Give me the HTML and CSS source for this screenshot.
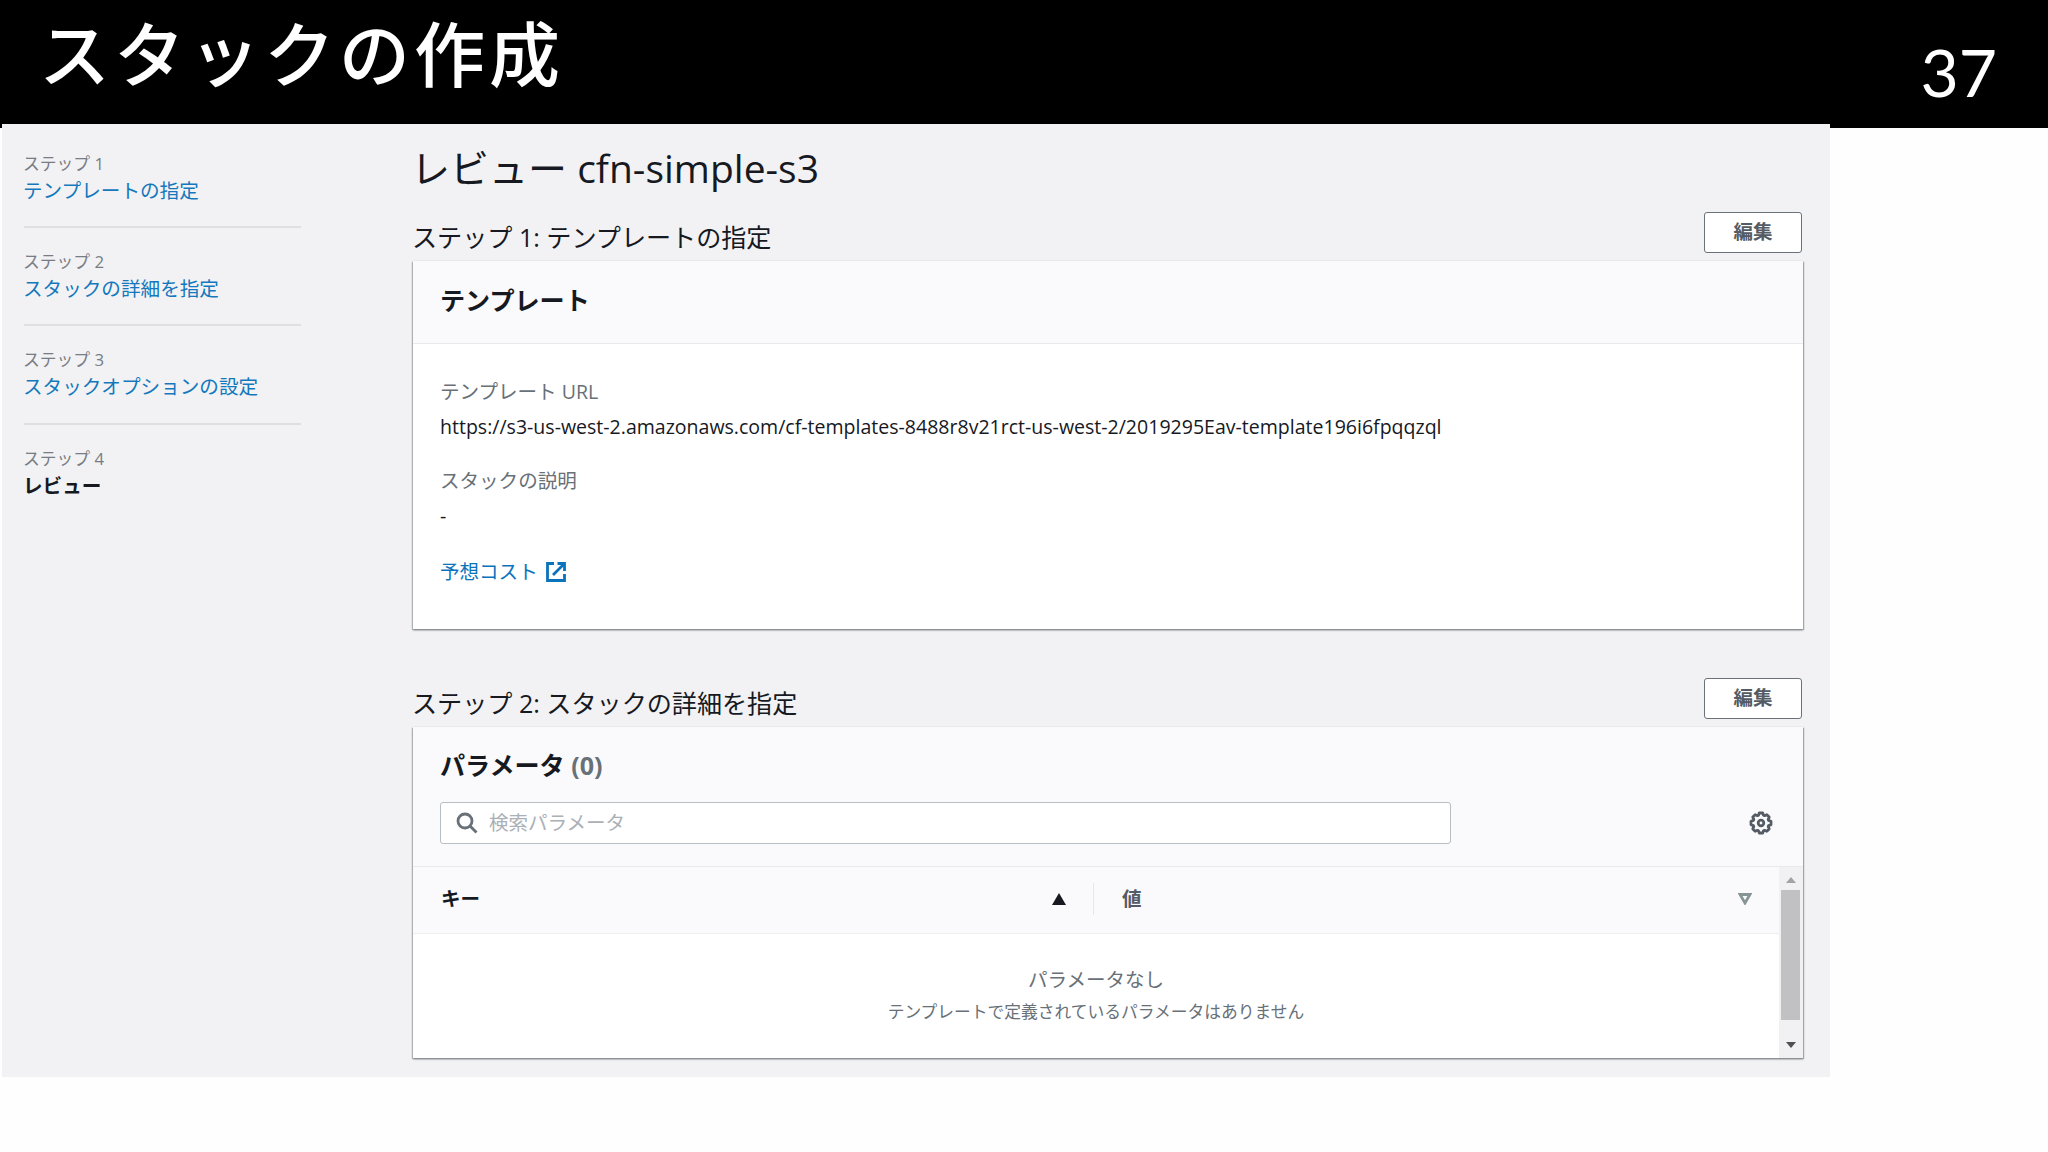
FILE: index.html
```html
<!DOCTYPE html>
<html lang="ja">
<head>
  <meta charset="UTF-8" />
  <meta name="viewport" content="width=device-width, initial-scale=1.0"/>
  <title>スタックの作成</title>
  <link rel="stylesheet" href="styles.css">
</head>
<body>
  <header class="slide-header">
    <h1>スタックの作成</h1>
    <span class="page-number">37</span>
  </header>

  <div class="console">
    <nav class="steps">
      <div class="step">
        <span class="step-label">ステップ 1</span>
        <a class="step-name">テンプレートの指定</a>
      </div>
      <div class="step">
        <span class="step-label">ステップ 2</span>
        <a class="step-name">スタックの詳細を指定</a>
      </div>
      <div class="step">
        <span class="step-label">ステップ 3</span>
        <a class="step-name">スタックオプションの設定</a>
      </div>
      <div class="step">
        <span class="step-label">ステップ 4</span>
        <span class="step-name current">レビュー</span>
      </div>
    </nav>

    <main class="review">
      <h2 class="review-title">レビュー cfn-simple-s3</h2>

      <section>
        <div class="section-head">
          <h3>ステップ 1: テンプレートの指定</h3>
          <button class="edit-btn">編集</button>
        </div>
        <div class="panel template-panel">
          <div class="panel-head"><h4>テンプレート</h4></div>
          <dl class="details">
            <dt>テンプレート URL</dt>
            <dd>https://s3-us-west-2.amazonaws.com/cf-templates-8488r8v21rct-us-west-2/2019295Eav-template196i6fpqqzql</dd>
            <dt>スタックの説明</dt>
            <dd>-</dd>
          </dl>
          <a class="cost-link">予想コスト
            <svg width="20" height="20" viewBox="0 0 20 20" fill="none" stroke="currentColor" stroke-width="2.8">
              <path d="M8 1.5H1.5v17h17V12M11.5 1.5h7V9M18 2L7 13"/>
            </svg>
          </a>
        </div>
      </section>

      <section>
        <div class="section-head">
          <h3>ステップ 2: スタックの詳細を指定</h3>
          <button class="edit-btn">編集</button>
        </div>
        <div class="panel param-panel">
          <div class="param-head">
            <h4>パラメータ <span class="count">(0)</span></h4>
            <div class="toolbar">
              <div class="search">
                <svg width="22" height="22" viewBox="0 0 22 22" fill="none" stroke="#687078" stroke-width="2.8">
                  <circle cx="9" cy="9" r="7"/>
                  <path d="M14 14l6.5 6.5"/>
                </svg>
                <span>検索パラメータ</span>
              </div>
              <svg class="gear" width="24" height="24" viewBox="0 0 24 24" fill="none" stroke="#545b64" stroke-width="2.8" stroke-linejoin="round">
                <path d="M10.3 2h3.4l.8 2.3 1 .4 2.3-1 2.4 2.4-1 2.3.4 1 2.4.9v3.4l-2.4.9-.4 1 1 2.3-2.4 2.4-2.3-1-1 .4-.8 2.3h-3.4l-.8-2.3-1-.4-2.3 1-2.4-2.4 1-2.3-.4-1L2 13.7v-3.4l2.4-.9.4-1-1-2.3 2.4-2.4 2.3 1 1-.4z"/>
                <circle cx="12" cy="12" r="2.8"/>
              </svg>
            </div>
          </div>
          <div class="table-wrap">
            <div class="table">
              <div class="row-head">
                <div class="col key">キー
                  <svg width="14" height="12" viewBox="0 0 14 12"><path d="M7 0l7 12H0z" fill="#16191f"/></svg>
                </div>
                <div class="col value">値
                  <svg width="14" height="12" viewBox="0 0 14 12"><path d="M2 1.5h10L7 10z" fill="none" stroke="#879596" stroke-width="2.8"/></svg>
                </div>
              </div>
              <div class="empty">
                <p class="empty-title">パラメータなし</p>
                <p class="empty-text">テンプレートで定義されているパラメータはありません</p>
              </div>
            </div>
            <div class="scrollbar">
              <svg width="10" height="6" viewBox="0 0 10 6"><path d="M5 0l5 6H0z" fill="#a3a3a3"/></svg>
              <div class="thumb"></div>
              <svg class="down" width="10" height="6" viewBox="0 0 10 6"><path d="M0 0h10L5 6z" fill="#505050"/></svg>
            </div>
          </div>
        </div>
      </section>
    </main>
  </div>
</body>
</html>
```
FILE: styles.css
```css
* {
  margin: 0;
  padding: 0;
  box-sizing: border-box;
}
body {
  width: 2048px;
  height: 1152px;
  overflow: hidden;
  background: #fefefe;
  font-family: "Open Sans", "Noto Sans CJK JP", sans-serif;
  font-size: 19.55px;
  line-height: 26px;
  color: #16191f;
}
h1, h2, h3, h4 {
  font-weight: 400;
}
svg {
  display: block;
  flex: none;
}

/* slide title bar */
.slide-header {
  height: 128px;
  padding: 0 51px 0 39px;
  background: #000;
  color: #fff;
  display: flex;
  justify-content: space-between;
}
.slide-header h1 {
  font-family: "Noto Sans CJK JP", sans-serif;
  font-size: 71px;
  font-weight: 500;
  line-height: 101px;
  letter-spacing: 4px;
}
.page-number {
  font-family: Lato, sans-serif;
  font-size: 66px;
  line-height: 144px;
}

/* console page */
.console {
  width: 1828px;
  height: 953px;
  margin: -4px 0 0 2px;
  position: relative;
  background: #f2f2f4;
  display: flex;
}
.steps {
  width: 277px;
  margin-left: 22px;
  padding-top: 27px;
}
.step {
  height: 98.4px;
  display: flex;
  flex-direction: column;
}
.step + .step {
  border-top: 2px solid #dedfe1;
  padding-top: 21px;
}
.step:first-child {
  height: 75px;
}
.step-label,
.step-name {
  margin-left: -1px;
}
.step-label {
  font-size: 16.8px;
  line-height: 25px;
  color: #777d84;
}
.step-name {
  font-size: 19.6px;
  line-height: 29px;
  color: #1478bd;
}
.step-name.current {
  color: #16191f;
  font-weight: 700;
}
.review {
  width: 1390px;
  margin-left: 112px;
}
.review-title {
  font-size: 39px;
  line-height: 50px;
  padding-top: 19px;
  margin-left: -2px;
}
.section-head {
  height: 68px;
  display: flex;
  justify-content: space-between;
}
.section-head h3 {
  font-size: 25.1px;
  line-height: 34px;
  padding-top: 27px;
  margin-left: -1px;
}
.edit-btn {
  width: 98px;
  height: 41px;
  margin: 19px 1px 0 0;
  padding-bottom: 5px;
  border: 1.5px solid #6b7178;
  border-radius: 3px;
  background: #fff;
  color: #545b64;
  font: 700 19.5px "Noto Sans CJK JP", sans-serif;
}
.panel {
  background: #fff;
  box-shadow: 0 1px 2px #7d8186, 1px 1px 1px #b4b7ba, -1px 1px 1px #c4c6c8;
}
.panel h4 {
  font-size: 25.1px;
  font-weight: 700;
  line-height: 34px;
}
.panel-head {
  height: 83px;
  padding: 22px 27px 0;
  background: #fafafc;
  border-bottom: 1px solid #e8e9ec;
}
.template-panel {
  height: 368px;
  margin-bottom: 30px;
}
.details {
  padding: 35px 27px 0;
}
.details dt {
  color: #687078;
}
.details dd {
  margin: 9px 0 28px;
}
.cost-link {
  display: flex;
  align-items: center;
  gap: 8px;
  margin: 30px 0 0 27px;
  color: #0b73bb;
}

/* parameters */
.param-panel {
  height: 331px;
}
.param-head {
  height: 140px;
  padding: 21px 30px 0 27px;
  background: #fafafc;
  border-bottom: 1px solid #e8e9ec;
}
.count {
  color: #687078;
}
.toolbar {
  display: flex;
  align-items: center;
  justify-content: space-between;
  margin-top: 20px;
}
.search {
  width: 1011px;
  height: 42px;
  padding: 0 15px 1px;
  border: 1.5px solid #b9bec3;
  border-radius: 3px;
  background: #fff;
  display: flex;
  align-items: center;
  gap: 11px;
  color: #aab0b6;
}
.table-wrap {
  height: 191px;
  display: flex;
}
.table {
  flex: 1;
}
.row-head {
  height: 67px;
  padding-bottom: 3px;
  background: #fafafc;
  border-bottom: 1px solid #eeeef1;
  display: flex;
  align-items: center;
  font-weight: 700;
}
.col {
  height: 32px;
  display: flex;
  align-items: center;
  justify-content: space-between;
  padding: 0 27px 0 28px;
}
.col.key {
  width: 681px;
  border-right: 1px solid #e6e7ea;
}
.col.value {
  flex: 1;
  color: #545b64;
}
.empty {
  padding-top: 33px;
  text-align: center;
  color: #687078;
}
.empty-text {
  font-size: 16.75px;
  line-height: 24px;
  margin-top: 7px;
}
.scrollbar {
  width: 24px;
  padding: 10px 1px 0 0;
  background: #f1f1f3;
  display: flex;
  flex-direction: column;
  align-items: center;
}
.thumb {
  width: 19px;
  height: 130px;
  margin: 7px 0 22px;
  background: #c1c0c2;
}
```
